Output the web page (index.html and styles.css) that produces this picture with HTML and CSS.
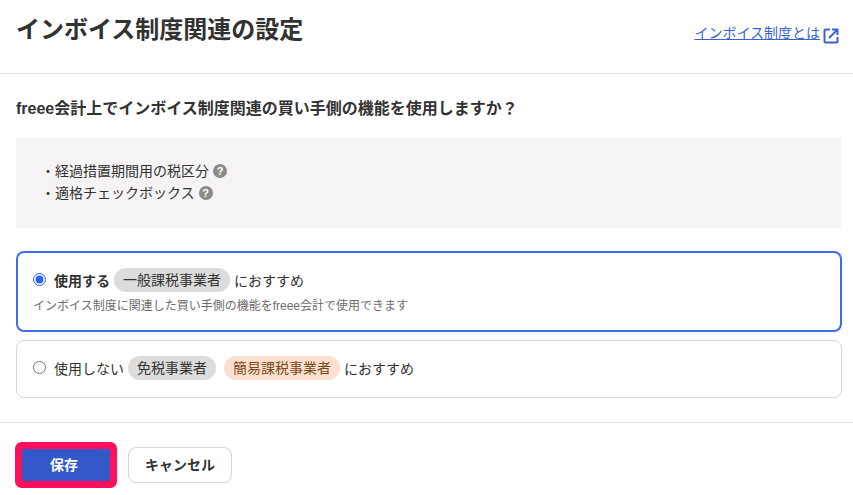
FILE: index.html
```html
<!DOCTYPE html>
<html lang="ja">
<head>
<meta charset="utf-8">
<title>インボイス制度関連の設定</title>
<link rel="stylesheet" href="styles.css">
</head>
<body>
<header class="header">
  <h1 class="title">インボイス制度関連の設定</h1>
  <a class="help-link" href="#"><span class="help-text">インボイス制度とは</span>
    <svg class="ext-icon" viewBox="0 0 16 16" width="16" height="16" aria-hidden="true">
      <path d="M7 1.500H2.500C1.900 1.500 1.500 1.900 1.500 2.500V13.500C1.500 14.100 1.900 14.500 2.500 14.500H13.500C14.100 14.500 14.500 14.100 14.500 13.500V9" fill="none" stroke="#3b63cf" stroke-width="2"/>
      <path d="M9 1.500H14.500V7M14 2L6 10" fill="none" stroke="#3b63cf" stroke-width="2"/>
    </svg>
  </a>
</header>
<main class="main">
  <h2 class="question">freee会計上でインボイス制度関連の買い手側の機能を使用しますか？</h2>
  <div class="info">
    <ul class="info-list">
      <li class="info-item">経過措置期間用の税区分<span class="q-icon">?</span></li>
      <li class="info-item">適格チェックボックス<span class="q-icon">?</span></li>
    </ul>
  </div>
  <div class="options">
    <label class="option option-on">
      <div class="option-row">
        <input class="radio" type="radio" name="use" checked>
        <span class="option-label strong">使用する</span>
        <span class="tag tag-gray">一般課税事業者</span>
        <span class="rec">におすすめ</span>
      </div>
      <p class="option-desc">インボイス制度に関連した買い手側の機能をfreee会計で使用できます</p>
    </label>
    <label class="option">
      <div class="option-row">
        <input class="radio" type="radio" name="use">
        <span class="option-label">使用しない</span>
        <span class="tag tag-gray">免税事業者</span>
        <span class="tag tag-orange">簡易課税事業者</span>
        <span class="rec">におすすめ</span>
      </div>
    </label>
  </div>
</main>
<footer class="footer">
  <button class="btn btn-primary" type="button">保存</button>
  <button class="btn btn-secondary" type="button">キャンセル</button>
</footer>
</body>
</html>
```

FILE: styles.css
```css
* { box-sizing: border-box; }
html, body { margin: 0; padding: 0; }
body {
  width: 853px;
  height: 495px;
  overflow: hidden;
  background: #fff;
  color: #323232;
  font-family: "Liberation Sans", "Noto Sans CJK JP", sans-serif;
  font-size: 14px;
}
.header {
  height: 74px;
  padding: 13px 14px 0 16px;
  border-bottom: 1px solid #e5e5e5;
  display: flex;
  justify-content: space-between;
  align-items: flex-start;
}
.title {
  margin: 0;
  font-size: 24px;
  line-height: 34px;
  font-weight: 700;
  color: #323232;
}
.help-link {
  display: flex;
  align-items: flex-start;
  margin-top: 10px;
  color: #3b63cf;
  font-size: 14px;
  line-height: 20px;
  text-decoration: none;
}
.help-text { text-decoration: underline; }
.ext-icon { margin: 5px 0 0 3px; flex: none; }
.main { padding: 23px 12px 0 16px; }
.question {
  margin: 0;
  font-size: 16px;
  line-height: 24px;
  font-weight: 700;
  color: #323232;
}
.info {
  margin-top: 17px;
  height: 90px;
  background: #f5f3f3;
  padding: 22px 0 0 26px;
}
.info-list { list-style: none; margin: 0; padding: 0; }
.info-item {
  line-height: 22px;
  font-size: 14px;
  display: flex;
  align-items: center;
}
.info-item::before {
  content: "・";
  width: 13px;
  flex: none;
  font-size: 14px;
  text-indent: -1px;
}
.q-icon {
  width: 14px;
  height: 14px;
  margin-left: 4px;
  border-radius: 50%;
  background: #8c8989;
  color: #fff;
  font-size: 11px;
  font-weight: 700;
  line-height: 14px;
  text-align: center;
}
.options {
  margin: 23px -1px 0 0;
  display: flex;
  flex-direction: column;
  gap: 8px;
}
.option {
  display: block;
  height: 58px;
  padding: 15px 16px;
  border: 1px solid #d7d5d5;
  border-radius: 8px;
}
.option-on {
  height: 81px;
  padding: 15px;
  border: 2px solid #3d6cf0;
}
.option-row { display: flex; align-items: center; height: 24px; }
.radio {
  width: 13px;
  height: 13px;
  margin: -2px 8px 0 0;
  accent-color: #2864f0;
  flex: none;
}
.option-label { font-size: 14px; margin-right: 4px; }
.strong { font-weight: 700; }
.tag {
  height: 24px;
  line-height: 24px;
  padding: 0 9px;
  border-radius: 12px;
  font-size: 14px;
  margin-right: 4px;
}
.tag + .tag { margin-left: 4px; }
.tag-gray { background: #dcdcdc; }
.tag-orange { background: #fcdfcf; color: #7a4a1e; }
.rec { font-size: 14px; }
.option-desc {
  margin: 5px 0 0;
  font-size: 12px;
  line-height: 18px;
  color: #6e6b6b;
}
.footer {
  margin-top: 24px;
  border-top: 1px solid #e5e5e5;
  padding: 24px 0 0 22px;
  display: flex;
  align-items: center;
}
.btn {
  font-family: inherit;
  font-size: 14px;
  font-weight: 700;
  cursor: pointer;
}
.btn-primary {
  width: 88px;
  height: 32px;
  padding: 0 4px 2px 0;
  background: #3359c9;
  color: #fff;
  border: 0;
  border-radius: 2px;
  box-shadow: 0 0 0 7px #ff0f5c;
}
.btn-secondary {
  width: 104px;
  height: 36px;
  margin-left: 18px;
  padding: 0 0 2px;
  background: #fff;
  color: #323232;
  border: 1px solid #d7d5d5;
  border-radius: 8px;
}
```
